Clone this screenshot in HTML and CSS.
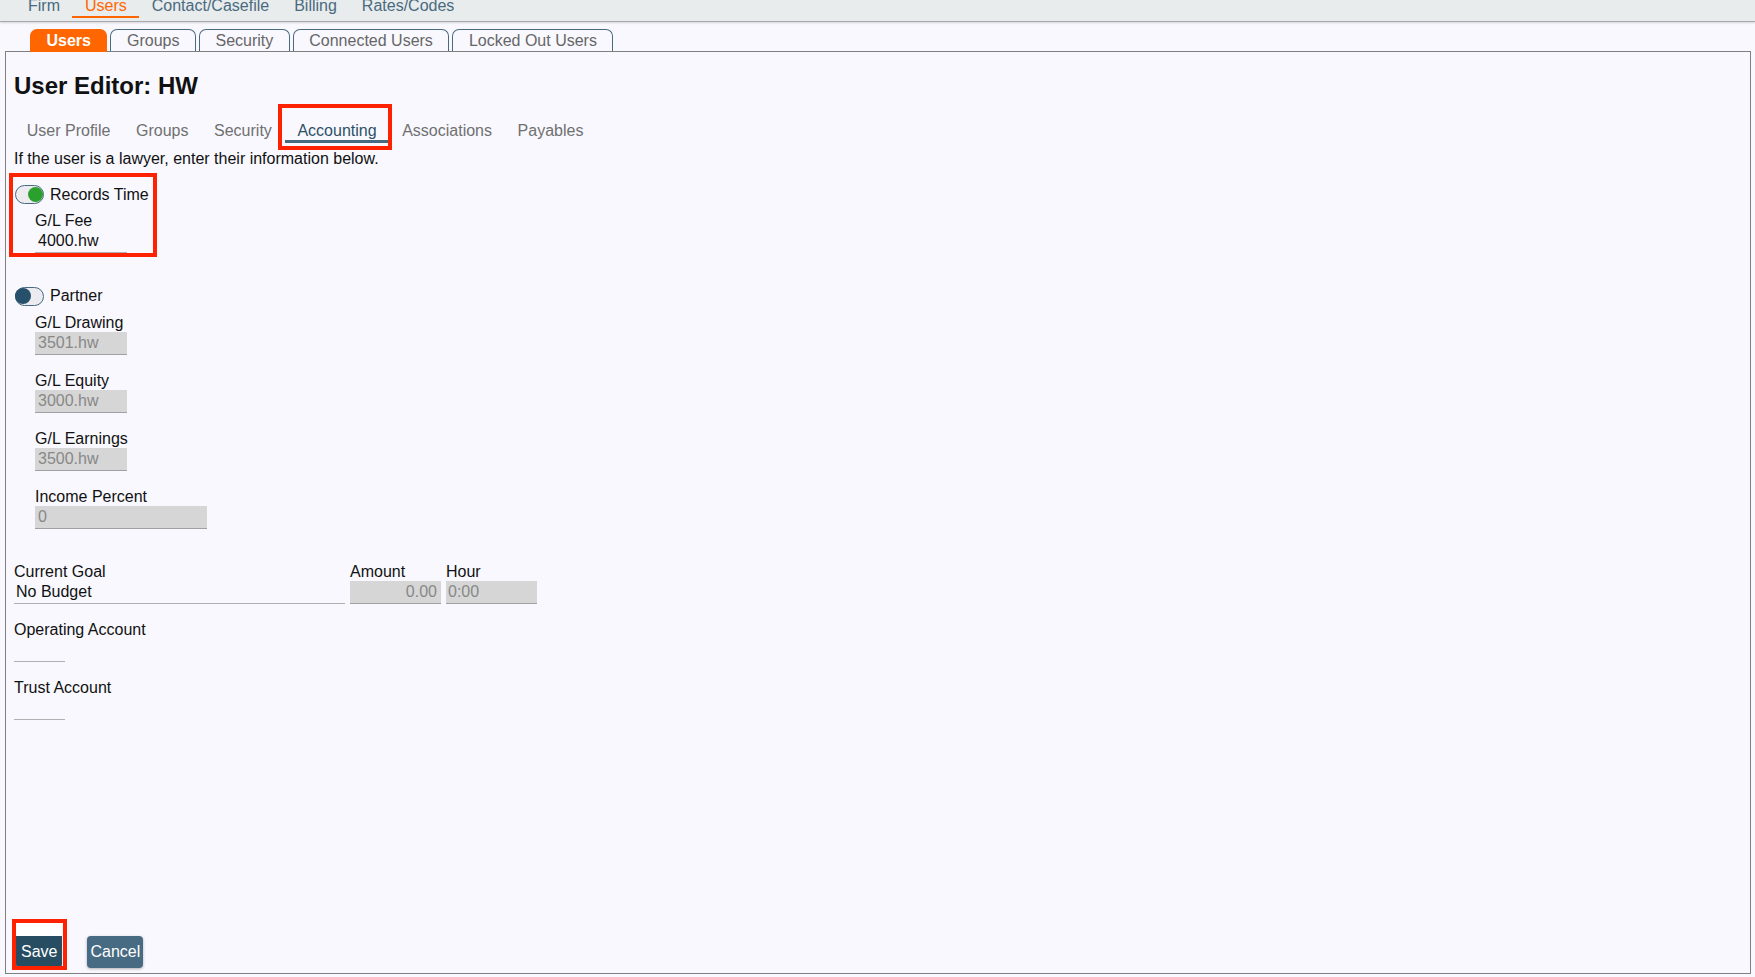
FILE: index.html
```html
<!DOCTYPE html>
<html lang="en">
<head>
    <meta charset="UTF-8">
    <title>User Editor</title>
    <link rel="stylesheet" href="styles.css">
</head>
<body>
<div class="page">
    <div class="topnav">
        <a class="topnav-item">Firm</a>
        <a class="topnav-item active">Users</a>
        <a class="topnav-item">Contact/Casefile</a>
        <a class="topnav-item">Billing</a>
        <a class="topnav-item">Rates/Codes</a>
    </div>

    <div class="tabs">
        <span class="tab active">Users</span>
        <span class="tab">Groups</span>
        <span class="tab">Security</span>
        <span class="tab">Connected Users</span>
        <span class="tab">Locked Out Users</span>
    </div>

    <div class="panel">
        <h1 class="title">User Editor: HW</h1>

        <div class="subnav">
            <span class="subnav-item">User Profile</span>
            <span class="subnav-item">Groups</span>
            <span class="subnav-item">Security</span>
            <span class="subnav-item active marked">Accounting</span>
            <span class="subnav-item">Associations</span>
            <span class="subnav-item">Payables</span>
        </div>

        <p class="intro">If the user is a lawyer, enter their information below.</p>

        <div class="group marked">
            <div class="toggle-row">
                <span class="switch on"></span>
                <span>Records Time</span>
            </div>
            <div class="field">
                <label>G/L Fee</label>
                <input class="input plain" type="text" value="4000.hw">
            </div>
        </div>

        <div class="group partner">
            <div class="toggle-row">
                <span class="switch"></span>
                <span>Partner</span>
            </div>
            <div class="field">
                <label>G/L Drawing</label>
                <input class="input" type="text" value="3501.hw" disabled>
            </div>
            <div class="field">
                <label>G/L Equity</label>
                <input class="input" type="text" value="3000.hw" disabled>
            </div>
            <div class="field">
                <label>G/L Earnings</label>
                <input class="input" type="text" value="3500.hw" disabled>
            </div>
            <div class="field">
                <label>Income Percent</label>
                <input class="input wide" type="text" value="0" disabled>
            </div>
        </div>

        <div class="goal">
            <div>
                <label>Current Goal</label>
                <input class="input plain goal-select" type="text" value="No Budget">
            </div>
            <div>
                <label>Amount</label>
                <input class="input num" type="text" value="0.00" disabled>
            </div>
            <div>
                <label>Hour</label>
                <input class="input hour" type="text" value="0:00" disabled>
            </div>
        </div>

        <div class="field">
            <label>Operating Account</label>
            <div class="select-empty"></div>
        </div>
        <div class="field">
            <label>Trust Account</label>
            <div class="select-empty"></div>
        </div>

        <div class="footer">
            <div class="save-wrap marked">
                <div class="save-top"></div>
                <button class="btn save">Save</button>
            </div>
            <button class="btn cancel">Cancel</button>
        </div>
    </div>
</div>
</body>
</html>
```

FILE: styles.css
```css
* {
    box-sizing: border-box;
}
html, body {
    margin: 0;
    padding: 0;
    background: #f8f8fe;
    font-family: "Liberation Sans", Arial, sans-serif;
    font-size: 16px;
    color: #111;
}
.page {
    height: 977px;
    display: flex;
    flex-direction: column;
    padding: 0 4px 3px 5px;
    overflow: hidden;
}

/* top menu, scrolled up a little */
.topnav {
    height: 22px;
    margin: 0 -4px 0 -5px;
    padding: 0 0 3px 15.5px;
    display: flex;
    background: #e8ecec;
    border-bottom: 1px solid #a8a8a8;
    box-shadow: 0 1px 2px rgba(0,0,0,.15);
}
.topnav-item {
    padding: 0 12.5px 5px;
    line-height: 11px;
    color: #4a6a80;
    border-bottom: 2px solid transparent;
}
.topnav-item.active {
    color: #ff6600;
    border-bottom-color: #ff6600;
}

/* file tabs */
.tabs {
    display: flex;
    align-items: flex-end;
    margin: 7px 0 0 25px;
    height: 22px;
}
.tab {
    height: 22px;
    margin-right: 3px;
    padding: 2px 15.5px 0;
    line-height: 18px;
    color: #666;
    border: 1px solid #4a6a80;
    border-bottom: none;
    border-radius: 7px 7px 0 0;
}
.tab.active {
    height: 23px;
    margin-bottom: -1px;
    position: relative;
    z-index: 1;
    background: #ff6600;
    border-color: #ff6600;
    color: #fff;
    font-weight: bold;
}

.panel {
    flex: 1;
    display: flex;
    flex-direction: column;
    align-items: flex-start;
    border: 1px solid #808080;
    padding: 0 7px 5px 8px;
}
.title {
    margin: 20px 0 0;
    font-size: 24px;
    line-height: 28px;
    font-weight: bold;
}

.subnav {
    display: flex;
    margin-top: 22px;
}
.subnav-item {
    padding: 0 12.8px;
    line-height: 18px;
    color: #707070;
    border-bottom: 3px solid transparent;
}
.subnav-item.active {
    color: #2e5068;
    border-bottom-color: #466a80;
}

.intro {
    margin: 7px 0 0;
    line-height: 18px;
}

/* red annotation frames drawn over the content */
.marked {
    position: relative;
}
.marked::after {
    content: "";
    position: absolute;
    border: 4px solid #ff2200;
    pointer-events: none;
}
.subnav-item.marked::after {
    top: -18px;
    bottom: -10px;
    left: -7px;
    right: -3px;
}
.group.marked::after {
    top: -12.5px;
    bottom: -4px;
    left: -5px;
    right: -8px;
}
.save-wrap.marked::after {
    top: -4px;
    bottom: -2px;
    left: -4px;
    right: -5px;
}

.group {
    margin-top: 17px;
}
.group.partner {
    margin-top: 34px;
}
.goal {
    margin-top: 33px;
}
.toggle-row {
    display: flex;
    align-items: center;
    gap: 6px;
    height: 19px;
    line-height: 18px;
}
.switch {
    position: relative;
    width: 29px;
    height: 19px;
    margin-left: 1px;
    border: 1.5px solid #466a80;
    border-radius: 10px;
    background: #ececf0;
}
.switch::after {
    content: "";
    position: absolute;
    top: 0;
    left: -1px;
    width: 16px;
    height: 16px;
    border-radius: 50%;
    background: #27506c;
}
.switch.on::after {
    left: auto;
    right: 0;
    width: 15px;
    height: 15px;
    top: 0.5px;
    background: #2ca02c;
}

.field {
    margin-top: 16px;
}
.group .field {
    margin-left: 21px;
}
.toggle-row + .field {
    margin-top: 6.5px;
}
.partner .toggle-row + .field {
    margin-top: 7.5px;
}
label {
    display: block;
    line-height: 19px;
}
.input {
    display: block;
    width: 92px;
    height: 23px;
    margin: 0;
    padding: 0 3px;
    font: inherit;
    line-height: 22px;
    color: #888;
    background: #d6d6d6;
    border: none;
    border-bottom: 1px solid #a0a0a0;
    border-radius: 0;
    outline: none;
}
.input.plain {
    color: #111;
    background: transparent;
    border-bottom-color: #b0b0b0;
}
.input.wide {
    width: 172px;
}

.goal {
    display: grid;
    grid-template-columns: 331px 91px 91px;
    column-gap: 5px;
}
.goal-select {
    width: 331px;
    padding: 0 2px;
}
.input.num {
    width: 91px;
    text-align: right;
    padding-right: 4px;
}
.input.hour {
    width: 91px;
    padding-left: 2px;
}

.select-empty {
    width: 51px;
    height: 23px;
    border-bottom: 1px solid #b0b0b0;
}

.footer {
    margin-top: auto;
    display: flex;
    align-items: flex-end;
}
.save-wrap {
    display: flex;
    flex-direction: column;
    margin-left: 2px;
}
.save-top {
    height: 13px;
    background: #fff;
}
.btn {
    height: 32px;
    border: none;
    border-radius: 4px;
    font: inherit;
    color: #fff;
    cursor: pointer;
}
.save {
    padding: 0 5px;
    border-radius: 0 0 4px 4px;
    background: #274d63;
}
.cancel {
    margin-left: 25px;
    padding: 0 3px;
    background: #476b82;
    box-shadow: 0 1px 3px rgba(0,0,0,.3);
}
```
